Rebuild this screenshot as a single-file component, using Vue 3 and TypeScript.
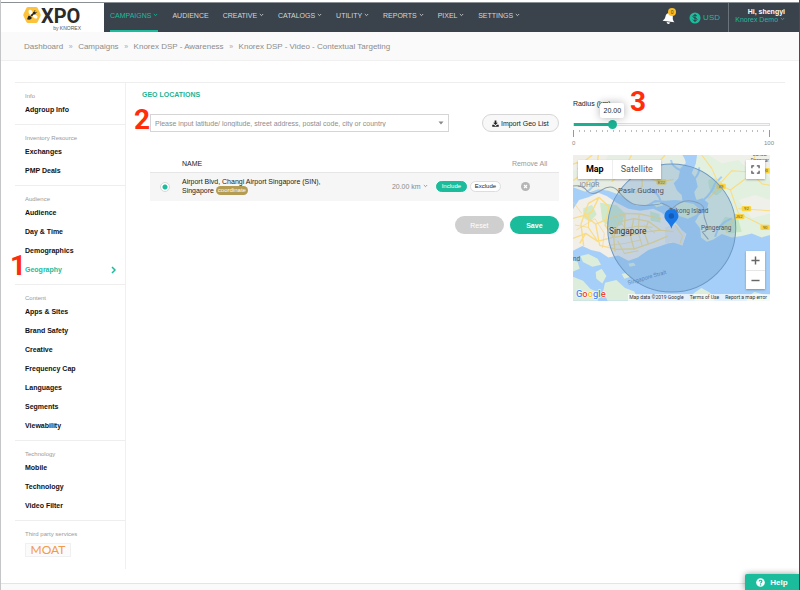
<script setup lang="ts">
import { ref } from 'vue'

interface NavItem { label: string; menu: boolean; active?: boolean }
interface Section { title: string; items: string[] }

const nav: NavItem[] = [
  { label: 'CAMPAIGNS', menu: true, active: true },
  { label: 'AUDIENCE', menu: false },
  { label: 'CREATIVE', menu: true },
  { label: 'CATALOGS', menu: true },
  { label: 'UTILITY', menu: true },
  { label: 'REPORTS', menu: true },
  { label: 'PIXEL', menu: true },
  { label: 'SETTINGS', menu: true },
]

const crumbs: string[] = [
  'Dashboard',
  'Campaigns',
  'Knorex DSP - Awareness',
  'Knorex DSP - Video - Contextual Targeting',
]

const sections: Section[] = [
  { title: 'Info', items: ['Adgroup Info'] },
  { title: 'Inventory Resource', items: ['Exchanges', 'PMP Deals'] },
  { title: 'Audience', items: ['Audience', 'Day & Time', 'Demographics', 'Geography'] },
  {
    title: 'Content',
    items: ['Apps & Sites', 'Brand Safety', 'Creative', 'Frequency Cap', 'Languages', 'Segments', 'Viewability'],
  },
  { title: 'Technology', items: ['Mobile', 'Technology', 'Video Filter'] },
]

const current = ref('Geography')
const query = ref('')
const radius = ref(20)
const ticks = Array.from({ length: 35 }, (_, i) => i)
</script>

<template>
  <div class="page">
    <header class="header">
      <a class="logo" href="#" aria-label="XPO by KNOREX">
        <svg class="logo-mark" viewBox="0 0 18 18" aria-hidden="true">
          <path d="M5 1h8q1 0 1.500.8L17.500 8q.5 1 0 2l-3 6.200q-.5.800-1.500.8H5q-1 0-1.500-.8L.5 10q-.5-1 0-2l3-6.200Q4 1 5 1z" fill="#fdc23c" />
          <ellipse cx="7.600" cy="6.300" rx="1.900" ry="2.700" transform="rotate(-25 7.600 6.300)" fill="#fff" />
          <ellipse cx="12" cy="10.300" rx="1.900" ry="2.700" transform="rotate(-60 12 10.300)" fill="#fff" />
          <path d="M4 13.200l1.500-3.400 1.800.2 1.500 1.800-.6 1.200-2 .8z" fill="#222" />
          <path d="M8.200 9.800l2-2" stroke="#222" stroke-width="1.800" />
          <circle cx="11.300" cy="6.900" r="1.500" fill="#222" />
          <path d="M11.600 5.500l.4-1.500M12.700 6.500l1.500-.3" stroke="#222" stroke-width=".6" />
        </svg>
        <span class="logo-words">
          <span class="logo-name">XPO</span>
          <span class="logo-by">by KNOREX</span>
        </span>
      </a>
      <nav class="nav">
        <a v-for="n in nav" :key="n.label" href="#" class="nav-item" :class="{ active: n.active }">
          {{ n.label }}
          <svg v-if="n.menu" class="chev" viewBox="0 0 6 4" aria-hidden="true"><path d="M1 .8l2 2 2-2" /></svg>
        </a>
      </nav>
      <div class="tools">
        <button class="bell" aria-label="Notifications">
          <svg viewBox="0 0 14 14" aria-hidden="true">
            <g transform="rotate(8 7 7)"><path d="M7 1c.7 0 1 .5 1 1 2 .5 2.600 2 2.700 4 .1 2 .8 3.200 2.300 4.500H1C2.500 9.200 3.200 8 3.300 6 3.400 4 4 2.500 6 2c0-.5.3-1 1-1z" fill="#fff" /><path d="M5.300 11.300h3.400a1.700 1.700 0 0 1-3.400 0z" fill="#fff" /></g>
          </svg>
          <span class="badge">0</span>
        </button>
        <button class="currency">
          <svg viewBox="0 0 12 12" aria-hidden="true">
            <circle cx="6" cy="6" r="5.500" fill="#1abc9c" />
            <path d="M8 4.200C7.600 3.400 6.900 3.200 6 3.200c-1.200 0-2 .5-2 1.300 0 1.900 4 .9 4 2.900 0 .9-.9 1.400-2 1.400-1 0-1.800-.4-2.100-1.200M6 2v8" fill="none" stroke="#34414a" stroke-width="1" />
          </svg>
          USD
        </button>
        <a class="user" href="#">
          <strong>Hi, shengyi</strong>
          <span>Knorex Demo <svg class="chev" viewBox="0 0 6 4" aria-hidden="true"><path d="M1 .8l2 2 2-2" /></svg></span>
        </a>
      </div>
    </header>

    <nav class="crumbs" aria-label="Breadcrumb">
      <template v-for="(c, i) in crumbs" :key="c">
        <span v-if="i" class="sep">»</span>
        <a href="#">{{ c }}</a>
      </template>
    </nav>

    <div class="body">
      <aside class="side">
        <section v-for="s in sections" :key="s.title" class="group">
          <h2>{{ s.title }}</h2>
          <a
            v-for="item in s.items"
            :key="item"
            href="#"
            :class="{ active: item === current }"
            @click.prevent="current = item"
          >
            {{ item }}
            <svg v-if="item === current" class="arrow" viewBox="0 0 5 8" aria-hidden="true"><path d="M1 1l3 3-3 3" /></svg>
          </a>
        </section>
        <section class="group">
          <h2>Third party services</h2>
          <button class="moat">MOAT</button>
        </section>
        <span class="step step-1">1</span>
      </aside>

      <main class="main">
        <h1>GEO LOCATIONS</h1>
        <div class="geo">
          <div class="search-row">
            <div class="combo">
              <input
                v-model="query"
                type="text"
                aria-label="Location"
                placeholder="Please input latitude/ longitude, street address, postal code, city or country"
              />
              <svg viewBox="0 0 6 4" aria-hidden="true"><path d="M.5.5h5L3 3.500z" fill="#888" /></svg>
            </div>
            <button class="import">
              <svg viewBox="0 0 8 8" aria-hidden="true"><path d="M3 .5h2v2.700h1.700L4 5.800 1.300 3.200H3z M.3 5.300h1.900L4 7l1.800-1.700h1.900v2.400H.3z" fill="#222" /></svg>
              Import Geo List
            </button>
            <span class="step step-2">2</span>
          </div>
          <table>
            <thead>
              <tr>
                <th class="c-pick"></th>
                <th class="c-name">NAME</th>
                <th class="c-dist"></th>
                <th class="c-mode"></th>
                <th class="c-remove"><button class="link">Remove All</button></th>
              </tr>
            </thead>
            <tbody>
              <tr>
                <td class="c-pick"><input type="radio" name="place" checked aria-label="Airport Blvd" /></td>
                <td class="c-name">Airport Blvd, Changi Airport Singapore (SIN), Singapore <span class="tag">coordinate</span></td>
                <td class="c-dist"><button class="link">20.00 km <svg class="chev" viewBox="0 0 6 4" aria-hidden="true"><path d="M1 .8l2 2 2-2" /></svg></button></td>
                <td class="c-mode"><div class="modes"><button class="pill on">Include</button><button class="pill">Exclude</button></div></td>
                <td class="c-remove">
                  <button class="remove" aria-label="Remove">
                    <svg viewBox="0 0 9 9" aria-hidden="true"><circle cx="4.500" cy="4.500" r="4.500" fill="#b5b5b5" /><path d="M3 3l3 3M6 3L3 6" stroke="#fff" stroke-width="1.200" /></svg>
                  </button>
                </td>
              </tr>
            </tbody>
          </table>
          <div class="actions">
            <button class="act reset">Reset</button>
            <button class="act save">Save</button>
          </div>
        </div>
      </main>

      <section class="panel">
        <label for="radius">Radius (km)</label>
        <span class="step step-3">3</span>
        <div class="slider">
          <div class="rail"><div class="fill" :style="{ width: radius + '%' }"></div></div>
          <input id="radius" v-model.number="radius" type="range" min="0" max="100" />
          <output class="tip" for="radius" :style="{ left: radius + '%' }">{{ radius.toFixed(2) }}</output>
        </div>
        <div class="ticks"><i v-for="t in ticks" :key="t"></i></div>
        <div class="scale"><span>0</span><span>100</span></div>

        <div class="map">
          <svg class="chart" viewBox="24 15 591 438" preserveAspectRatio="xMidYMid slice" aria-label="Map of Singapore">
            <rect x="24" y="15" width="591" height="438" fill="#a5cff8" />
            <!-- Johor, west of the river -->
            <path d="M24 15H372L362 40 346 55 340 85 326 100 336 122 350 135 352 152 330 150 300 152 270 150 245 165 215 168 190 150 165 135 130 122 100 118 70 128 40 118 24 112Z" fill="#e6eee3" />
            <path d="M24 15H130L110 50 60 62 24 60Z" fill="#efeee9" />
            <path d="M150 80L230 70 300 95 310 135 240 145 190 130 150 110Z" fill="#e9ebe7" />
            <!-- Johor, east of the river -->
            <path d="M392 15H615V255L590 262 560 250 530 258 500 262 470 252 445 268 425 275 408 262 405 235 390 215 402 195 425 180 430 160 412 145 395 150 385 130 398 110 392 85 380 70 388 50Z" fill="#e2f0df" />
            <path d="M430 15L470 40 520 30 560 70 600 60 615 90V15ZM520 150L570 135 615 150V190L560 205Z" fill="#eff0ea" />
            <path d="M430 90q25-12 40 8t-15 38q-25-5-25-46zM480 200l40 10 10 35-40 5-25-25z" fill="#c7e8c5" />
            <!-- Rivers -->
            <path d="M352 15Q370 40 358 70T372 112L362 150 392 146 384 110Q390 90 376 72L392 42 396 15Z" fill="#a5cff8" />
            <path d="M345 60Q320 50 318 30M385 90Q405 70 402 52M415 150Q440 130 450 100L470 80M450 260Q460 220 500 205M60 130Q90 110 96 84T120 46M286 152Q280 130 260 122" fill="none" stroke="#a5cff8" stroke-width="6" stroke-linejoin="round" />
            <!-- Singapore island -->
            <path d="M24 178L42 150 70 142 100 128 125 138 155 158 190 176 225 182 265 176 290 188 310 206 332 218 350 240 364 252 352 286 332 276 308 280 280 290 250 300 218 322 190 332 160 316 130 322 105 306 78 300 52 288 24 302Z" fill="#f1efe8" />
            <path d="M105 158L155 166 180 190 170 225 140 234 112 214ZM55 175l26-10 14 28-20 22-20-12zM255 184l28 8 4 26-30-6z" fill="#cfe9ca" />
            <path d="M300 232L330 224 362 252 352 286 320 276 300 280Z" fill="#e4e6e8" />
            <!-- Islands -->
            <path d="M332 166l24-10 30 6 16 14-8 18-26 12-26-8zM262 160l20-4 14 10-22 6z" fill="#d8ecd4" />
            <path d="M46 318l24-6 28 14 10 18-26 6-28-14zM24 330l14 6 6 20-20 8zM92 366l18-10 14 22-12 22-18-14zM24 380l30 12 22 24 30 14-8 22H24zM120 398l34-8 26 24 28 10 12 28h-92l-14-26zM170 372l16-4 10 12-18 6zM385 430l24-16 26 14 12 24h-58zM548 440l20-14 22 6 25 4v17h-70zM190 340l16-2 6 8-18 4z" fill="#dceedb" />
            <!-- Roads -->
            <g fill="none" stroke="#fbdc80" stroke-width="4" stroke-linejoin="round">
              <path d="M24 42L60 32 82 15M24 92L62 66 130 52M60 100L92 80 100 15M140 95L170 68 230 74 282 96 326 88M170 68L200 15M282 96L270 50 300 15M230 74L232 108 210 130" />
              <path d="M410 15L440 55 462 104 496 120 520 190 600 230M496 120L560 72 570 15M462 104L500 62 615 70M520 176L615 182M505 206L484 248M560 72L592 102 615 106M465 110L430 145" stroke-width="3" />
              <path d="M24 265L62 250 98 274 142 262 190 256 240 246 286 240 325 245M24 205L58 196 92 222 104 286 156 298 210 296 262 278 308 258M56 288L48 222 70 160 102 142M102 142L132 170 120 226 146 262 150 304M146 262L160 216 206 206 250 214 286 240M92 222L132 206 180 190 226 192 288 206M206 206L196 258 208 300M250 214L238 248 250 282M180 190L178 256M58 196L80 186 102 142M62 250L44 280" />
              <path d="M30 225L70 232 98 274M70 232L72 188M222 194L220 250 232 288M158 272L178 310 220 302M120 226L162 238 220 228 262 232M330 225L352 258 345 280" stroke-width="3" />
            </g>
            <g fill="none" stroke="#f6d58b" stroke-width="2">
              <path d="M34 240L90 206 118 250 112 294M130 286L180 280 226 270M170 220L186 244M236 224L270 250M24 155L50 190M36 54L76 92" />
            </g>
            <path d="M24 108Q52 104 66 122T110 120 160 124 196 158 250 166 288 160 322 176Q350 146 384 154T416 180 424 220 412 246L430 268" fill="none" stroke="#8f9ca9" stroke-width="3" />
            <g fill="#f9d342"><rect x="274" y="88" width="30" height="16" rx="4" /><rect x="454" y="101" width="28" height="16" rx="4" /><rect x="530" y="168" width="28" height="16" rx="4" /><rect x="506" y="192" width="32" height="16" rx="4" /><rect x="586" y="224" width="28" height="16" rx="4" /><rect x="588" y="54" width="26" height="16" rx="4" /></g>
            <g class="shield"><text x="289" y="101">E22</text><text x="468" y="114">89</text><text x="544" y="181">92</text><text x="522" y="205">J52</text><text x="600" y="237">90</text><text x="601" y="67">90</text></g>
            <circle cx="320" cy="234" r="192" fill="#6b9ecd" fill-opacity=".34" stroke="#6c98c4" stroke-width="3" />
            <g class="place">
              <text x="38" y="112" class="wide">JOHOR</text>
              <text x="159" y="130" class="mid">Pasir Gudang</text>
              <text x="312" y="188" class="small">Tekong Island</text>
              <text x="408" y="240" class="small">Pengerang</text>
              <text x="132" y="252" class="big">Singapore</text>
              <text x="24" y="334" class="small">nd</text>
              <text x="563" y="19" class="tiny">Bandar</text>
              <text x="557" y="36" class="tiny">Penawar</text>
              <text x="190" y="404" class="sea" transform="rotate(-16 190 404)">Singapore Strait</text>
            </g>
            <path d="M319 236C314 218 298 212 298 198a21 21 0 0 1 42 0c0 14-16 20-21 38z" fill="#1a78e6" />
            <circle cx="319" cy="198" r="8" fill="#145bb5" />
            <text x="33" y="441" class="google"><tspan fill="#4285f4">G</tspan><tspan fill="#ea4335">o</tspan><tspan fill="#fbbc05">o</tspan><tspan fill="#4285f4">g</tspan><tspan fill="#34a853">l</tspan><tspan fill="#ea4335">e</tspan></text>
          </svg>
          <div class="types"><button class="chosen">Map</button><button>Satellite</button></div>
          <button class="full" aria-label="Full screen">
            <svg viewBox="0 0 10 10" aria-hidden="true"><path d="M1 3.500V1h2.500M6.500 1H9v2.500M9 6.500V9H6.500M3.500 9H1V6.500" fill="none" stroke="#555" stroke-width="1.400" /></svg>
          </button>
          <div class="zoom">
            <button aria-label="Zoom in"><svg viewBox="0 0 10 10" aria-hidden="true"><path d="M5 .5v9M.5 5h9" /></svg></button>
            <button aria-label="Zoom out"><svg viewBox="0 0 10 10" aria-hidden="true"><path d="M.5 5h9" /></svg></button>
          </div>
          <div class="legal"><span>Map data ©2019 Google</span><a href="#">Terms of Use</a><a href="#">Report a map error</a></div>
        </div>
      </section>
    </div>

    <footer class="foot"></footer>
    <button class="help">
      <svg viewBox="0 0 10 10" aria-hidden="true"><circle cx="5" cy="5" r="4.800" fill="#fff" /><path d="M3.500 4c0-2 3-2 3-.2C6.500 5 5 4.900 5 6.200M5 7v1.200" fill="none" stroke="#1abc9c" stroke-width="1.300" /></svg>
      Help
    </button>
  </div>
</template>

<style>
body { margin: 0; background: #fff; }
</style>

<style scoped>
.page {
  box-sizing: border-box;
  min-height: 100vh;
  display: flex;
  flex-direction: column;
  position: relative;
  padding-top: 2px;
  border-left: 1px solid #c4c6c8;
  border-right: 1px solid #4a4c4c;
  font-family: "Liberation Sans", Arial, sans-serif;
  font-size: 7px;
  line-height: 9px;
  color: #222;
  background: #fff;
}
.page * { box-sizing: border-box; }
a { color: inherit; text-decoration: none; }
button { font: inherit; color: inherit; background: none; border: 0; padding: 0; margin: 0; cursor: pointer; }
svg { display: block; }
.chev { display: inline-block; width: 5px; height: 4px; fill: none; stroke: currentColor; stroke-width: 1; vertical-align: 1px; }

.header { display: flex; height: 30px; background: #3a434c; border-top: 1px solid #8b9095; }
.logo { display: flex; width: 103px; padding: 3px 0 0 22px; background: #fff; color: #2b2b2b; }
.logo-mark { width: 18px; height: 18px; }
.logo-words { display: flex; flex-direction: column; width: 40px; }
.logo-name { font: 700 20px/20px Roboto, sans-serif; }
.logo-by { font-size: 5px; line-height: 5px; text-align: right; color: #555; }
.nav { display: flex; gap: 14px; padding-left: 6px; color: #d3d6d9; white-space: nowrap; }
.nav-item { height: 29px; line-height: 26px; }
.nav-item.active { color: #1abc9c; border-bottom: 2px solid #1abc9c; }
.tools { display: flex; margin-left: auto; align-items: stretch; }
.bell { position: relative; width: 14px; }
.bell svg { width: 14px; height: 14px; }
.badge { position: absolute; top: 5px; right: 0; width: 8px; height: 8px; border-radius: 4px; background: #f8bb25; color: #4b3a10; font-size: 5px; line-height: 8px; text-align: center; }
.currency { display: flex; align-items: center; gap: 2px; margin-left: 13px; color: #1abc9c; font-size: 8px; }
.currency svg { width: 12px; height: 12px; }
.user { display: flex; flex-direction: column; justify-content: center; width: 71px; margin-left: 8px; padding: 0 14px 3px 0; border-left: 1px solid #6b737a; text-align: right; line-height: 8px; white-space: nowrap; color: #1abc9c; }
.user strong { color: #fff; font-size: 7px; }

.crumbs { display: flex; align-items: center; height: 29px; padding-left: 23px; border-bottom: 1px solid #f0f0f0; background: #fafafa; color: #8c8c8c; font-size: 8px; white-space: nowrap; }
.sep { width: 15px; text-align: center; font-size: 7px; color: #aaa; }

.body { display: flex; margin: 21px 14px 0; border-top: 1px solid #eee; }
.side { position: relative; flex: 0 0 111px; min-height: 486px; border-right: 1px solid #f0f0f0; }
.group { padding: 9px 0 5px 10px; border-bottom: 1px solid #eee; }
.group:nth-of-type(6) { border-bottom: 0; }
.group h2 { margin: 0; font-size: 6px; line-height: 8px; font-weight: 400; color: #999; }
.group a { display: flex; align-items: center; justify-content: space-between; height: 19px; padding-right: 9px; font-weight: 700; color: #111; }
.group a.active { color: #1abc9c; }
.arrow { width: 5px; height: 8px; fill: none; stroke: #1abc9c; stroke-width: 1.5; }
.moat { width: 46px; height: 14px; margin-top: 5px; border: 1px solid #f0f0f0; background: #fbfbfb; color: #f39a4a; font: 400 12px/12px Lato, sans-serif; }

.step { position: absolute; font: 700 28px/22px Roboto, sans-serif; color: #ff2d0a; }
.step-1 { left: -5px; top: 172px; }
.step-2 { left: -16px; top: -5px; }
.step-3 { left: 57px; top: 8px; }

.main { flex: 1; min-width: 0; padding: 7px 14px 0 16px; }
h1 { margin: 0; font-size: 7px; line-height: 9px; font-weight: 700; color: #1ab394; }
.geo { padding: 15px 0 0 8px; }
.search-row { position: relative; display: flex; justify-content: space-between; gap: 33px; }
.combo { display: flex; align-items: center; flex: 1; height: 18px; padding: 0 4px; border: 1px solid #d5d5d5; }
.combo input { flex: 1; min-width: 0; padding: 0; border: 0; outline: 0; background: none; font: inherit; color: #222; }
.combo input::placeholder { color: #8e8e8e; opacity: 1; }
.combo svg { width: 6px; height: 4px; }
.import { display: flex; align-items: center; justify-content: center; gap: 2px; width: 77px; height: 18px; border: 1px solid #d6d6d6; border-radius: 9px; background: #f8f8f8; white-space: nowrap; }
.import svg { width: 7px; height: 7px; }

table { width: 100%; margin-top: 26px; border-collapse: collapse; table-layout: fixed; }
th { height: 14px; padding: 0 0 2px; text-align: left; font-weight: 400; }
td { height: 29px; padding: 0; background: #f6f6f6; border-top: 1px solid #e6e6e6; }
.c-pick { width: 32px; }
.c-dist { width: 44px; color: #8a8a8a; white-space: nowrap; }
.c-mode { width: 76px; }
.c-remove { width: 47px; color: #999; }
td.c-name { padding: 0 60px 2px 0; }
td.c-pick input { display: block; appearance: none; width: 10px; height: 10px; margin: 0 0 0 10px; border: 1px solid #d8d8d8; border-radius: 5px; background: radial-gradient(circle, #1abc9c 2px, #fff 3px); }
.tag { display: inline-block; padding: 0 2px; border-radius: 5px; background: #b39b54; color: #fff; font-size: 6px; line-height: 9px; vertical-align: top; }
.modes { display: flex; gap: 3px; }
.pill { width: 31px; height: 11px; border: 1px solid #ddd; border-radius: 6px; background: #fff; font-size: 6px; line-height: 9px; }
.pill.on { border-color: #1abc9c; background: #1abc9c; color: #fff; }
.remove { display: block; margin-left: 9px; }
.remove svg { width: 9px; height: 9px; }
.actions { display: flex; justify-content: flex-end; gap: 6px; margin-top: 15px; }
.act { width: 49px; height: 18px; border-radius: 9px; color: #fff; }
.reset { background: #cfcfcf; }
.save { background: #1abc9c; font-weight: 700; }

.panel { position: relative; flex: 0 0 25.6%; margin-right: 15px; padding-top: 16px; }
.panel label { display: block; }
.slider { position: relative; height: 9px; margin-top: 12px; }
.rail { position: absolute; inset: 3px 0; border: 1px solid #ddd; background: #f7f7f7; }
.fill { height: 3px; margin-top: -1px; background: #1fae91; }
.slider input { position: absolute; left: -4px; top: 0; width: calc(100% + 8px); height: 9px; margin: 0; appearance: none; background: none; }
.slider input::-webkit-slider-thumb { appearance: none; width: 9px; height: 9px; border-radius: 5px; background: #1ab394; }
.tip { position: absolute; top: -17px; width: 24px; margin-left: -12px; border-radius: 2px; background: #fff; box-shadow: 0 0 8px rgba(0, 0, 0, .3); line-height: 15px; text-align: center; }
.ticks { display: flex; justify-content: space-between; height: 7px; margin-top: 1px; }
.ticks i { width: 1px; height: 2px; background: #bbb; }
.ticks i:first-child, .ticks i:last-child { height: 7px; background: #999; }
.scale { display: flex; justify-content: space-between; margin: 2px -4px 0 -1px; font-size: 6px; color: #888; }

.map { position: relative; margin-top: 7px; font-family: Roboto, sans-serif; overflow: hidden; }
.chart { width: 100%; height: auto; font-family: Roboto, sans-serif; }
.shield { font-size: 13px; text-anchor: middle; fill: #6b5510; }
.place { fill: #4d565e; }
.wide { font-size: 20px; fill: #7f8790; }
.mid { font-size: 23px; }
.small { font-size: 19px; }
.tiny { font-size: 14px; }
.big { font-size: 25px; fill: #333; }
.sea { font-size: 17px; fill: #5c86b8; }
.google { font-size: 28px; font-weight: 500; stroke: #fff; stroke-width: 3; paint-order: stroke; }
.types { position: absolute; left: 5px; top: 5px; display: flex; background: #fff; box-shadow: 0 1px 2px rgba(0, 0, 0, .3); }
.types button { height: 19px; padding: 0 8px; font-size: 9px; color: #555; }
.types .chosen { color: #000; font-weight: 700; border-right: 1px solid #eee; }
.full, .zoom { position: absolute; right: 5px; width: 19px; background: #fff; box-shadow: 0 1px 2px rgba(0, 0, 0, .3); }
.full { top: 5px; height: 19px; }
.full svg, .zoom svg { width: 9px; height: 9px; margin: auto; }
.zoom { bottom: 12px; display: flex; flex-direction: column; }
.zoom button { height: 19px; }
.zoom button + button { border-top: 1px solid #e6e6e6; }
.zoom svg { stroke: #666; stroke-width: 1.6; }
.legal { position: absolute; right: 0; bottom: 0; display: flex; gap: 6px; padding: 0 3px 0 1px; background: rgba(255, 255, 255, .7); font-size: 5px; line-height: 7px; color: #333; white-space: nowrap; }

.foot { height: 7px; margin-top: auto; border-top: 1px solid #e4e4e4; background: #fafafa; }
.help { position: absolute; right: 0; bottom: 0; display: flex; align-items: center; justify-content: center; gap: 5px; width: 54px; height: 16px; border-radius: 2px 0 0 0; background: #1abc9c; box-shadow: 0 0 6px rgba(0, 0, 0, .4); color: #fff; font-size: 8px; font-weight: 700; }
.help svg { width: 9px; height: 9px; }
</style>
